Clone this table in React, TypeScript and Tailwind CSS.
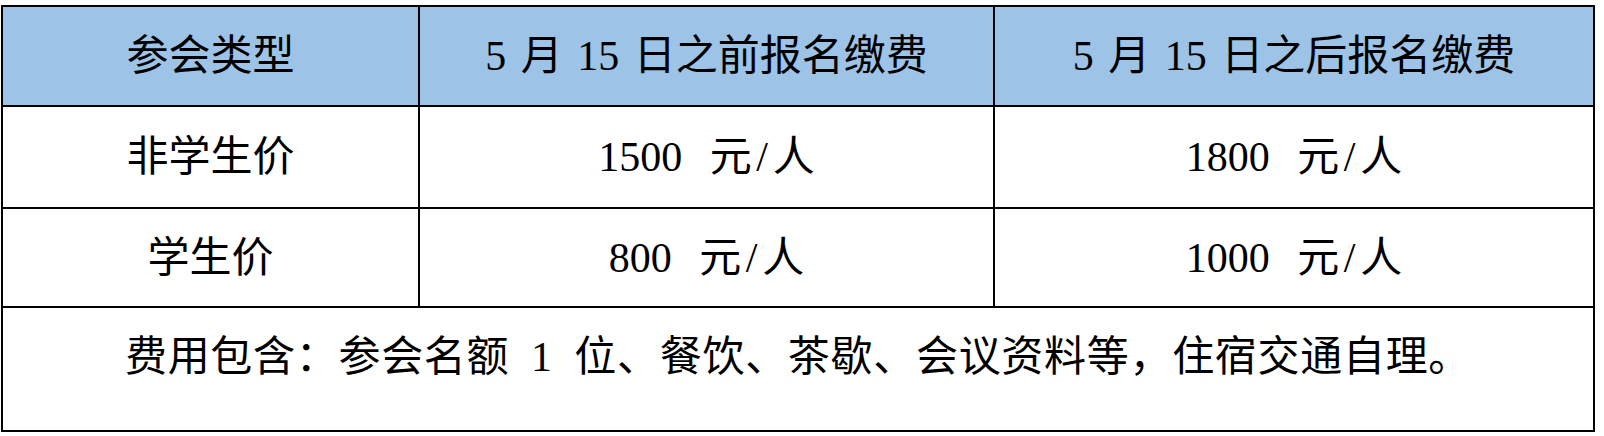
import React from "react";

const font = "font-['Liberation_Serif','Noto_Sans_CJK_SC',serif]";

function Price({ n }: { n: string }) {
  return (
    <div className="flex items-center justify-center bg-white [word-spacing:0.4em]">
      <span>
        {n} 元<span className="inline-block w-[21px] text-center">/</span>人
      </span>
    </div>
  );
}

export default function App() {
  return (
    <div className="w-[1604px] h-[436px] bg-white pl-[1px] pt-[5px]">
      <div
        className={`grid w-[1594px] grid-cols-[415px_573px_598px] grid-rows-[98px_100px_97px_122px] gap-[2px] bg-black p-[2px] text-[42px] leading-none text-black ${font}`}
      >
        <div className="flex items-center justify-center bg-[#9dc3e6]">参会类型</div>
        <div className="flex items-center justify-center bg-[#9dc3e6] [word-spacing:4px]">5 月 15 日之前报名缴费</div>
        <div className="flex items-center justify-center bg-[#9dc3e6] [word-spacing:4px]">5 月 15 日之后报名缴费</div>

        <div className="flex items-center justify-center bg-white">非学生价</div>
        <Price n="1500" />
        <Price n="1800" />

        <div className="flex items-center justify-center bg-white">学生价</div>
        <Price n="800" />
        <Price n="1000" />

        <div className="col-span-3 flex items-center justify-center bg-white pb-[24px] tracking-[0.7px] [word-spacing:0.25em]">
          费用包含：参会名额 1 位、餐饮、茶歇、会议资料等，住宿交通自理。
        </div>
      </div>
    </div>
  );
}
